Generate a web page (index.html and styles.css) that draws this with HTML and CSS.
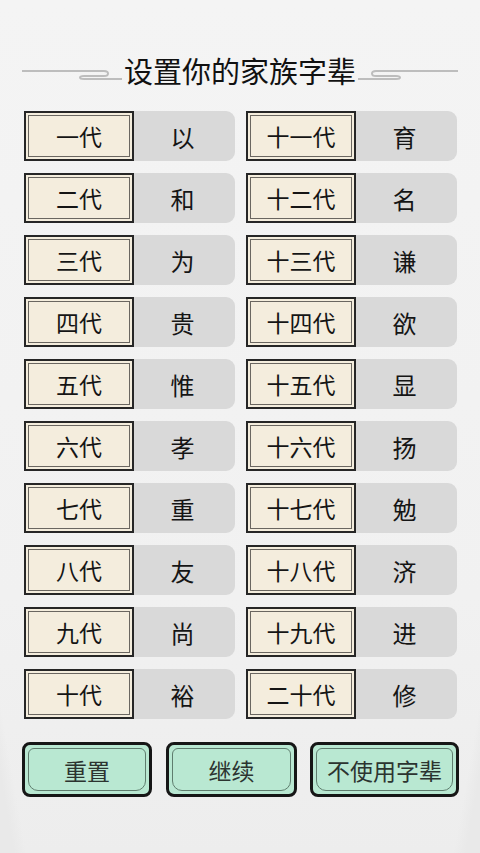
FILE: index.html
```html
<!DOCTYPE html>
<html lang="zh">
<head>
<meta charset="utf-8">
<title>设置你的家族字辈</title>
<link rel="stylesheet" href="styles.css">
</head>
<body>
<div class="page">
  <header class="header">
    <svg class="orn" viewBox="0 0 100 24" width="100" height="24"><path d="M0 13 H82 Q86 13 86 15.5 Q86 18 82 18 H62 Q58 18 58 19.5 Q58 21 62 21 H100" fill="none" stroke="#bdbdbd" stroke-width="2"/></svg>
    <h1 class="title">设置你的家族字辈</h1>
    <svg class="orn flip" viewBox="0 0 100 24" width="100" height="24"><path d="M0 13 H82 Q86 13 86 15.5 Q86 18 82 18 H62 Q58 18 58 19.5 Q58 21 62 21 H100" fill="none" stroke="#bdbdbd" stroke-width="2"/></svg>
  </header>
  <div class="grid">
    <div class="row"><div class="label">一代</div><div class="val">以</div></div>
    <div class="row"><div class="label">二代</div><div class="val">和</div></div>
    <div class="row"><div class="label">三代</div><div class="val">为</div></div>
    <div class="row"><div class="label">四代</div><div class="val">贵</div></div>
    <div class="row"><div class="label">五代</div><div class="val">惟</div></div>
    <div class="row"><div class="label">六代</div><div class="val">孝</div></div>
    <div class="row"><div class="label">七代</div><div class="val">重</div></div>
    <div class="row"><div class="label">八代</div><div class="val">友</div></div>
    <div class="row"><div class="label">九代</div><div class="val">尚</div></div>
    <div class="row"><div class="label">十代</div><div class="val">裕</div></div>
    <div class="row"><div class="label">十一代</div><div class="val">育</div></div>
    <div class="row"><div class="label">十二代</div><div class="val">名</div></div>
    <div class="row"><div class="label">十三代</div><div class="val">谦</div></div>
    <div class="row"><div class="label">十四代</div><div class="val">欲</div></div>
    <div class="row"><div class="label">十五代</div><div class="val">显</div></div>
    <div class="row"><div class="label">十六代</div><div class="val">扬</div></div>
    <div class="row"><div class="label">十七代</div><div class="val">勉</div></div>
    <div class="row"><div class="label">十八代</div><div class="val">济</div></div>
    <div class="row"><div class="label">十九代</div><div class="val">进</div></div>
    <div class="row"><div class="label">二十代</div><div class="val">修</div></div>
  </div>
  <div class="buttons">
    <button class="btn b1">重置</button>
    <button class="btn b2">继续</button>
    <button class="btn b3">不使用字辈</button>
  </div>
</div>
</body>
</html>
```
FILE: styles.css
```css
html, body {
  margin: 0;
  padding: 0;
}
body {
  width: 480px;
  height: 853px;
  overflow: hidden;
  font-family: "Noto Sans CJK SC", "Noto Sans", sans-serif;
  color: #151515;
  background-color: #f2f2f2;
  background-image: linear-gradient(to bottom, #f4f4f4 0%, #f1f1f1 70%, #ededed 100%);
}
.page {
  width: 480px;
  height: 853px;
  background:
    linear-gradient(80deg, #e9e9e9 0, #e9e9e9 14px, transparent 26px) 0 640px / 40px 213px no-repeat,
    linear-gradient(-80deg, #e9e9e9 0, #e9e9e9 14px, transparent 26px) 440px 640px / 40px 213px no-repeat;
}
.header {
  display: flex;
  justify-content: center;
  align-items: center;
  gap: 2px;
  height: 36px;
  padding-top: 52px;
  margin-bottom: 23px;
}
.orn {
  display: block;
  flex: none;
}
.flip {
  transform: scaleX(-1);
}
.title {
  margin: 0;
  font-size: 29px;
  font-weight: 400;
  line-height: 36px;
  color: #111;
  white-space: nowrap;
}
.grid {
  display: grid;
  grid-auto-flow: column;
  grid-template-columns: 211px 211px;
  grid-template-rows: repeat(10, 50px);
  column-gap: 11px;
  row-gap: 12px;
  padding-left: 24px;
}
.row {
  display: flex;
  background: #d9d9d9;
  border-radius: 4px 9px 9px 4px;
}
.label {
  position: relative;
  box-sizing: border-box;
  width: 110px;
  height: 50px;
  flex: none;
  background: #f4eddd;
  border: 2px solid #262626;
  display: flex;
  align-items: center;
  justify-content: center;
  font-size: 23px;
  color: #151515;
}
.label::before {
  content: "";
  position: absolute;
  inset: 2px;
  border: 1px solid #6a6660;
  pointer-events: none;
}
.val {
  flex: 1;
  display: flex;
  align-items: center;
  justify-content: center;
  font-size: 24px;
  color: #151515;
  padding-right: 4px;
}
.buttons {
  display: flex;
  margin-top: 23px;
  padding-left: 22px;
  gap: 14px;
}
.btn {
  position: relative;
  box-sizing: border-box;
  height: 55px;
  margin: 0;
  padding: 0;
  border: 3px solid #161616;
  border-radius: 8px;
  background: #b9e8d2;
  font-family: "Noto Sans CJK SC", "Noto Sans", sans-serif;
  font-size: 23px;
  color: #2c3430;
  display: flex;
  align-items: center;
  justify-content: center;
}
.btn::before {
  content: "";
  position: absolute;
  inset: 3px;
  border: 1px solid #5f7d6e;
  border-radius: 6px 6px 10px 10px;
  pointer-events: none;
}
.b1 { width: 130px; }
.b2 { width: 131px; margin-right: -1px; }
.b3 { width: 149px; }
```
